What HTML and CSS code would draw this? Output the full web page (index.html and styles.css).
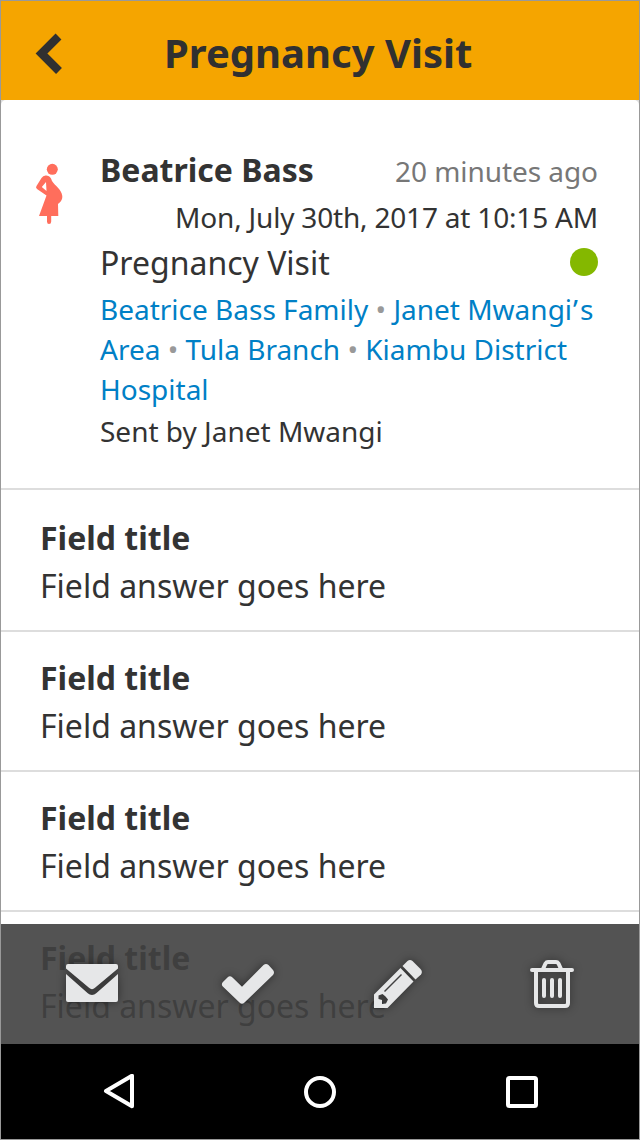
FILE: index.html
```html
<!DOCTYPE html>
<html lang="en">
<head>
<meta charset="utf-8">
<title>Pregnancy Visit</title>
<link rel="stylesheet" href="styles.css">
</head>
<body>
<div class="phone">
  <header class="header">
    <svg class="back" width="28" height="42" viewBox="35 33 28 42"><path d="M58.500 36.500 41.500 53.500 59 71" fill="none" stroke="#303030" stroke-width="8.300"/></svg>
    <h1 class="title">Pregnancy Visit</h1>
  </header>
  <main class="content">
    <section class="summary">
      <svg class="person" width="30" height="64" viewBox="34 162 30 64" fill="#ff6e5c"><circle cx="52.300" cy="169.300" r="5.500"/><path fill-rule="evenodd" d="M45.500 175.500C49 175 51 177.500 52 181C55 186 61.500 189 62.300 196C62.500 200 60.500 202 58 204L58.300 216H51.200V221.500Q51.200 224 49 224Q47 224 47 221.500V216H39L46.500 195.500L37 189Q35.300 187.500 36.500 186L41.500 178Q43 175.800 45.500 175.500ZM46 182 41.800 187 46.500 191Z"/></svg>
      <div class="details">
        <div class="row name-row"><h2 class="name">Beatrice Bass</h2><span class="ago">20 minutes ago</span></div>
        <div class="date">Mon, July 30th, 2017 at 10:15 AM</div>
        <div class="row"><span class="form">Pregnancy Visit</span><span class="status"></span></div>
        <div class="lineage"><a>Beatrice Bass Family</a> <i>•</i> <a>Janet Mwangi<span class="apostrophe">’</span>s<br>Area</a> <i>•</i> <a>Tula Branch</a> <i>•</i> <a>Kiambu District<br>Hospital</a></div>
        <div class="sender">Sent by Janet Mwangi</div>
      </div>
    </section>
    <section class="field"><h3>Field title</h3><p>Field answer goes here</p></section>
    <section class="field"><h3>Field title</h3><p>Field answer goes here</p></section>
    <section class="field"><h3>Field title</h3><p>Field answer goes here</p></section>
    <section class="field"><h3>Field title</h3><p>Field answer goes here</p></section>
  </main>
  <div class="actions">
    <svg width="52" height="40" viewBox="66 963 52 40" fill="#e6e7e8"><path d="M68 963H116Q118 963 118 965V967.500L95 986.800Q92 989.500 89 986.800L66 967.500V965Q66 963 68 963ZM66 973 87.500 992Q92 996 96.500 992L118 973V999Q118 1001 116 1001H68Q66 1001 66 999Z"/></svg>
    <svg width="52" height="40" viewBox="222 964 52 40" fill="#e6e7e8"><path d="M222.700 982.300 228 977Q230 975.500 232.500 977.500L242 986.700 263.500 965Q266 963 268.500 965L273 970Q275 972.500 273 975L244.500 1002.500Q242 1005 239.500 1002.500L222.800 986.500Q221 984.500 222.700 982.300Z"/></svg>
    <svg class="pencil" width="48" height="48" viewBox="374 960 48 48" fill="#e6e7e8"><path fill-rule="evenodd" d="M374 994.500 400.500 968 413.500 981.500 387.500 1008H374ZM378.500 995.500V999L382 1000V1004L386 1003.500 388 999.500 385.500 996.500 382.500 994Z"/><path d="M402.500 966 407.500 961Q410 959 412.500 961L420.500 969Q423 971.500 421 974.500L415.500 979.500Z"/><path d="M384.500 991.500 401.500 974.500" stroke="#414141" stroke-width="1.400"/></svg>
    <svg width="44" height="48" viewBox="530 960 44 48" fill="none" stroke="#e6e7e8" stroke-width="4" stroke-linejoin="round" stroke-linecap="round"><path d="M532 970H572M536 971V1003Q536 1006 539 1006H565Q568 1006 568 1003V971M543 969 545.500 963.500Q546.500 962 548 962H556Q557.500 962 558.500 963.500L561 969M544 980V996M552 980V996M560 980V996"/></svg>
  </div>
  <nav class="system">
    <svg width="32" height="36" viewBox="103 1074 32 36"><path d="M106 1091 132 1075.700V1106.300Z"/></svg>
    <svg class="home" width="32" height="32" viewBox="304 1076 32 32"><circle cx="320" cy="1092" r="14"/></svg>
    <svg width="32" height="32" viewBox="506 1076 32 32"><rect x="508" y="1078" width="28" height="28" rx="1.500"/></svg>
  </nav>
</div>
</body>
</html>
```
FILE: styles.css
```css
* { box-sizing: border-box; }
body { margin: 0; font-family: "Noto Sans", sans-serif; color: #333; background: #fff; }
h1, h2, h3, p { margin: 0; }
svg { display: block; flex: none; }
.phone { position: relative; width: 640px; height: 1140px; border: 1px solid #999; overflow: hidden; display: flex; flex-direction: column; background: #ddd; }
.header { flex: none; height: 99px; background: #f5a500; display: flex; padding: 32px 0 0 34px; }
.title { margin-left: 101px; font-size: 40px; line-height: 40px; color: #303030; white-space: nowrap; }
.content { flex: none; height: 944px; overflow: hidden; background: #fff; border-radius: 5px 5px 0 0; }
.summary { display: flex; padding: 48px 41px 0 33px; height: 388px; }
.person { margin-top: 14px; }
.details { width: 498px; margin-left: 36px; flex: none; font-size: 28px; line-height: 40px; }
.row { display: flex; justify-content: space-between; align-items: center; height: 40px; }
.name-row { height: 44px; }
.name { font-size: 32px; line-height: 44px; }
.ago { color: #777; padding-top: 2px; letter-spacing: -.06px; }
.date { line-height: 50px; text-align: right; letter-spacing: -.19px; }
.form { font-size: 32px; padding-top: 2px; }
.status { width: 28px; height: 28px; border-radius: 50%; background: #84b800; }
.lineage { margin-top: 7px; color: #999; white-space: nowrap; }
.lineage a { color: #0080c6; }
.lineage i { font-style: normal; }
.apostrophe { margin: 0 2px 0 1px; }
.sender { margin-top: 2px; }
.field { height: 140px; border-top: 2px solid #ddd; padding: 22px 39px 0; font-size: 32px; line-height: 48px; }
.summary + .field { height: 142px; padding-top: 24px; }
.field h3 { font-size: 32px; line-height: 48px; }
.actions { position: absolute; left: 0; right: 0; top: 923px; height: 120px; background: rgba(64, 64, 64, .9); display: flex; justify-content: space-between; align-items: center; padding: 0 65px; }
.actions svg { overflow: visible; filter: drop-shadow(0 0 5px rgba(0, 0, 0, .45)); }
.actions .pencil { margin: 0 4px 0 -4px; }
.system { flex: none; height: 95px; background: #000; display: flex; justify-content: space-between; align-items: center; padding: 0 101px 0 102px; }
.system svg { fill: none; stroke: #fff; stroke-width: 4; stroke-linejoin: round; }
.system .home { margin: 0 1px 0 -1px; }
```
